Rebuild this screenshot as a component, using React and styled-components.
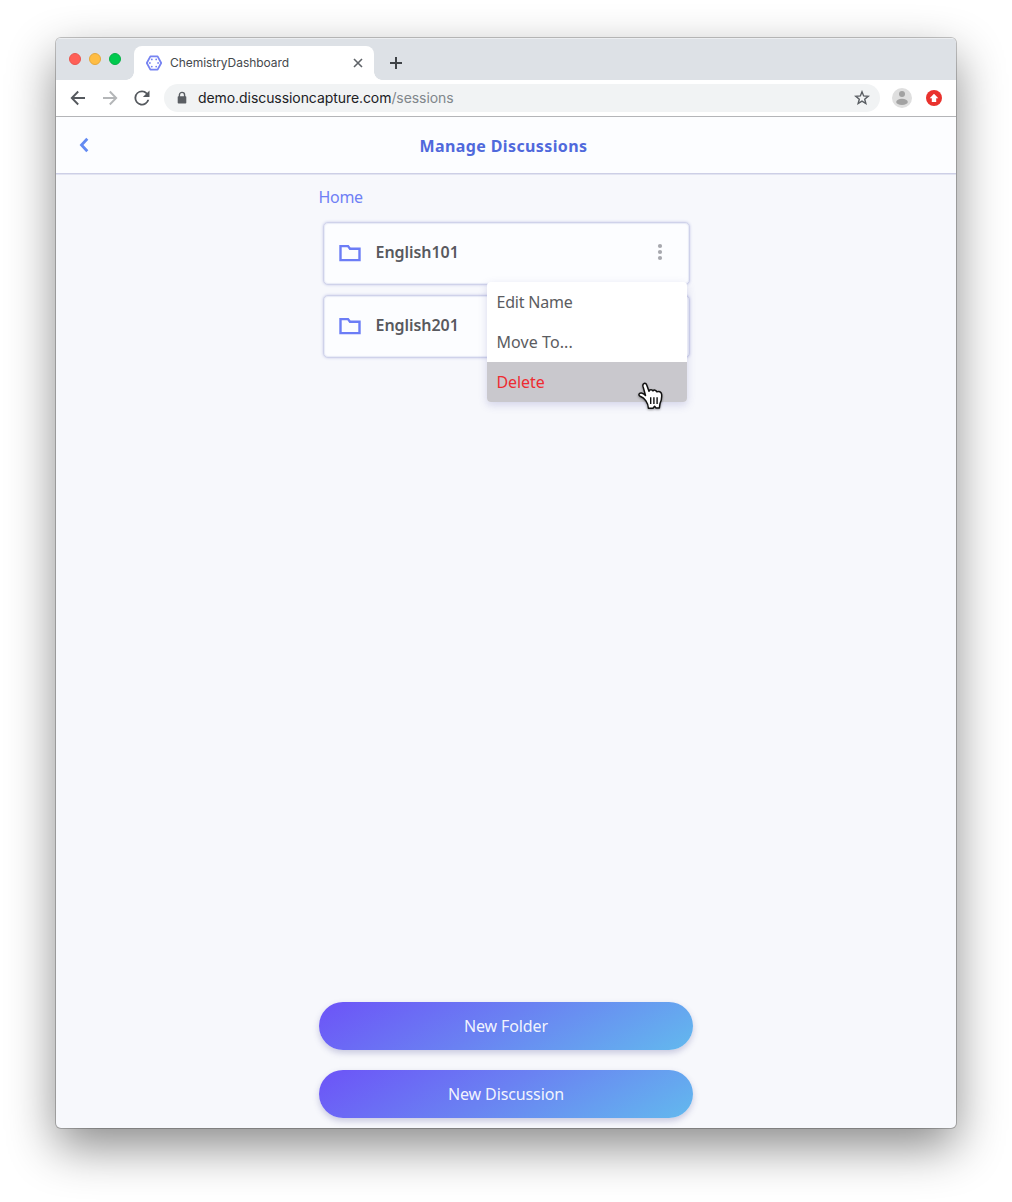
import React from "react";
import styled, { createGlobalStyle } from "styled-components";

const GlobalStyle = createGlobalStyle`
  *, *::before, *::after { box-sizing: border-box; }
  body { margin: 0; background: #fff; font-family: "Noto Sans", sans-serif; }
`;

const Desktop = styled.div`
  width: 1012px;
  height: 1202px;
  padding: 38px 56px 74px;
  overflow: hidden;
`;

const Window = styled.div`
  display: flex;
  flex-direction: column;
  width: 900px;
  height: 1090px;
  border-radius: 5px;
  overflow: hidden;
  background: #f7f8fc;
  box-shadow: 0 0 0 1px rgba(0, 0, 0, 0.22), 0 19px 48px rgba(0, 0, 0, 0.46);
`;

const TabStrip = styled.div`
  display: flex;
  height: 42px;
  flex: none;
  background: #dde1e6;
  box-shadow: inset 0 1px 0 #eceef1;
`;

const Lights = styled.div`
  display: flex;
  gap: 8px;
  width: 78px;
  padding: 15px 0 0 13px;
`;

const Light = styled.span`
  width: 12px;
  height: 12px;
  border-radius: 50%;
  background: ${(p) => p.$color};
  border: 1px solid ${(p) => p.$edge};
`;

const Tab = styled.div`
  position: relative;
  display: flex;
  align-items: center;
  width: 240px;
  height: 34px;
  margin-top: 8px;
  padding: 0 11px 0 12px;
  border-radius: 8px 8px 0 0;
  background: #fff;
  &::before, &::after {
    content: "";
    position: absolute;
    bottom: 0;
    width: 8px;
    height: 8px;
  }
  &::before {
    left: -8px;
    background: radial-gradient(circle at 0 0, transparent 7.5px, #fff 8px);
  }
  &::after {
    right: -8px;
    background: radial-gradient(circle at 100% 0, transparent 7.5px, #fff 8px);
  }
`;

const TabTitle = styled.span`
  flex: 1;
  margin-left: 8px;
  font: 400 12px/16px Inter, sans-serif;
  letter-spacing: -0.05px;
  color: #45494d;
`;

const NewTab = styled.div`
  display: flex;
  padding: 19px 0 0 16px;
`;

const Toolbar = styled.div`
  display: flex;
  align-items: center;
  height: 37px;
  flex: none;
  padding: 0 14px;
  background: #fff;
  border-bottom: 1px solid #b4b5b8;
`;

const NavButtons = styled.div`
  display: flex;
  gap: 16px;
  width: 94px;
`;

const AddressBar = styled.div`
  display: flex;
  align-items: center;
  width: 716px;
  height: 28px;
  padding: 0 10px 0 12px;
  border-radius: 14px;
  background: #f1f3f4;
`;

const Url = styled.span`
  flex: 1;
  margin-left: 10px;
  font: 400 14px/20px Inter, sans-serif;
  letter-spacing: -0.07px;
  color: #202124;
`;

const UrlPath = styled.span`
  color: #80868b;
`;

const Extensions = styled.div`
  display: flex;
  align-items: center;
  gap: 14px;
  margin-left: 12px;
`;

const Header = styled.header`
  display: flex;
  align-items: center;
  height: 57px;
  flex: none;
  padding: 1px 39px 0 22px;
  background: #fcfdff;
  border-bottom: 1px solid #cdcfe6;
  box-shadow: 0 1px 0 #e2e4f1;
`;

const BackIcon = styled.svg`
  display: block;
  flex: none;
  margin-top: -2px;
`;

const Title = styled.h1`
  flex: 1;
  margin: 0;
  text-align: center;
  font-size: 16px;
  line-height: 22px;
  font-weight: 700;
  letter-spacing: 0.38px;
  color: #5069dc;
`;

const Content = styled.main`
  display: flex;
  flex-direction: column;
  flex: 1;
  width: 374px;
  margin: 0 auto;
  padding: 12px 0 10px;
`;

const Breadcrumb = styled.a`
  font-size: 16px;
  line-height: 22px;
  margin-left: -0.5px;
  letter-spacing: -0.3px;
  color: #6f80f5;
`;

const FolderList = styled.div`
  display: flex;
  flex-direction: column;
  gap: 10px;
  margin: 14px 3px 0 4px;
  flex: 1;
`;

const FolderCard = styled.div`
  position: relative;
  display: flex;
  align-items: center;
  height: 63px;
  padding: 0 21px 3px 15px;
  border: 1px solid #cfd2ea;
  border-radius: 5px;
  background: #fcfdff;
  box-shadow: 0 0 3px #c6c9e8, inset 0 0 1px 1px rgba(207, 210, 234, 0.45);
`;

const FolderName = styled.span`
  flex: 1;
  margin-left: 14.5px;
  font-size: 16px;
  line-height: 22px;
  font-weight: 600;
  letter-spacing: -0.05px;
  color: #58595e;
`;

const Menu = styled.div`
  position: absolute;
  z-index: 1;
  top: 59px;
  right: 2px;
  width: 200px;
  border-radius: 4px;
  background: #fff;
  box-shadow: 0 3px 9px rgba(80, 80, 170, 0.22);
`;

const MenuItem = styled.div`
  height: 40px;
  padding: 9px 9.5px;
  font-size: 16px;
  line-height: 22px;
  letter-spacing: ${(p) => p.$tracking || "-0.1px"};
  color: ${(p) => (p.$danger ? "#ee2c32" : "#5b5c61")};
  background: ${(p) => (p.$hovered ? "#c9c8cd" : "transparent")};
  &:first-of-type { border-radius: 4px 4px 0 0; }
  &:last-of-type { border-radius: 0 0 4px 4px; }
`;

const Pointer = styled.svg`
  position: absolute;
  left: 149.5px;
  top: 99px;
  filter: drop-shadow(0 1px 1px rgba(0, 0, 0, 0.35));
`;

const Actions = styled.div`
  display: flex;
  flex-direction: column;
  gap: 20px;
`;

const ActionButton = styled.button`
  height: 48px;
  border: 0;
  border-radius: 24px;
  padding: 0;
  font: 400 16px/22px "Noto Sans", sans-serif;
  letter-spacing: -0.12px;
  color: rgba(255, 255, 255, 0.93);
  background: linear-gradient(150deg, #6c58f7 5%, #6a82f2 48%, #63b6ee 97%);
  box-shadow: 0 3px 6px rgba(60, 60, 140, 0.25);
`;

const FolderIcon = styled.svg`
  flex: none;
  margin-top: 2px;
`;

const Favicon = () => (
  <svg width="16" height="16" viewBox="0 0 16 16" fill="none">
    <path d="M4.4 1.4h7.2L15.2 8l-3.6 6.6H4.4L.8 8z" stroke="#7683f2" strokeWidth="1.8" strokeLinejoin="round" />
    <g fill="#7683f2">
      <circle cx="5.8" cy="4.4" r=".9" />
      <circle cx="10.2" cy="4.4" r=".9" />
      <circle cx="3.9" cy="8" r=".9" />
      <circle cx="12.1" cy="8" r=".9" />
      <circle cx="5.8" cy="11.6" r=".9" />
      <circle cx="10.2" cy="11.6" r=".9" />
    </g>
  </svg>
);

const Cross = () => (
  <svg width="10" height="10" viewBox="0 0 10 10">
    <path d="m1 1 8 8M9 1 1 9" stroke="#5f6368" strokeWidth="1.6" />
  </svg>
);

const Plus = () => (
  <svg width="12" height="12" viewBox="0 0 12 12">
    <path d="M6 0v12M0 6h12" stroke="#3f4347" strokeWidth="2" />
  </svg>
);

const Arrow = ({ color, flip }) => (
  <svg width="16" height="16" viewBox="0 0 16 16" fill="none" transform={flip ? "scale(-1 1)" : undefined}>
    <path d="M15 8H2.2M8.2 1.5 1.8 8l6.4 6.5" stroke={color} strokeWidth="1.9" />
  </svg>
);

const Reload = () => (
  <svg width="16" height="16" viewBox="4 4 16 16">
    <path fill="#55595e" d="M17.65 6.35A7.95 7.95 0 0 0 12 4a8 8 0 1 0 7.73 10h-2.08A6 6 0 1 1 12 6c1.66 0 3.14.69 4.22 1.78L13 11h7V4z" transform="translate(.7 .7) scale(.94)" />
  </svg>
);

const Lock = () => (
  <svg width="12" height="14" viewBox="0 0 12 14">
    <path d="M3.4 6V4a2.6 2.6 0 0 1 5.2 0v2" fill="none" stroke="#5a5e63" strokeWidth="1.4" />
    <rect x="1.7" y="5.2" width="8.6" height="7.3" rx=".8" fill="#5a5e63" />
  </svg>
);

const Star = () => (
  <svg width="16" height="16" viewBox="0 0 16 16">
    <path d="m8 1.8 1.65 4.15 4.55.3-3.5 2.9 1.15 4.4L8 11.1l-3.85 2.45 1.15-4.4-3.5-2.9 4.55-.3z" fill="none" stroke="#5a5e63" strokeWidth="1.4" />
  </svg>
);

const Avatar = () => (
  <svg width="20" height="20" viewBox="0 0 20 20">
    <circle cx="10" cy="10" r="10" fill="#dfdfdf" />
    <circle cx="10" cy="6" r="3" fill="#a2a2a2" />
    <ellipse cx="10" cy="13.9" rx="5.8" ry="3.1" fill="#a2a2a2" />
  </svg>
);

const UpdateBadge = () => (
  <svg width="16" height="16" viewBox="0 0 16 16">
    <circle cx="8" cy="8" r="8" fill="#e9322d" />
    <path d="M8 3.7 3.7 8.3h2.1V12h4.4V8.3h2.1z" fill="#fff" />
  </svg>
);

const Folder = () => (
  <FolderIcon width="22" height="18" viewBox="0 0 22 18">
    <path d="M1.5 16.1V2.1H9l2 2.7h9.5v11.3z" fill="none" stroke="#6c7df6" strokeWidth="2.4" />
  </FolderIcon>
);

const Dots = () => (
  <svg width="16" height="20" viewBox="0 0 16 20" fill="#a7a8ae">
    <circle cx="8" cy="4" r="2.1" />
    <circle cx="8" cy="10" r="2.1" />
    <circle cx="8" cy="16" r="2.1" />
  </svg>
);

const Hand = () => (
  <Pointer width="28" height="30" viewBox="0 0 28 30">
    <path
      d="M8.9 19.8C7.5 17.7 5.9 16.4 3.2 15.3 1 14.2 2 11.5 4.5 12 6.2 12.4 7.4 13.3 8.5 14.5L6 5.4C5.2 2.2 8.6 1.2 9.7 4L12 10.2C12.5 8.2 15.2 8.2 16 9.9 16.9 8.6 19.2 8.9 19.8 10.8 21.7 9.8 24.3 10.9 24.6 13.2 25 17 24.7 19.3 23 22.6L22.4 26.9H19L17.6 25.3 16 27.2H11.4C11.3 24.4 10.4 22 8.9 19.8Z"
      fill="#fff"
      stroke="#111"
      strokeWidth="1.5"
      strokeLinejoin="round"
    />
    <path d="M13.7 16.3v6.7M16.9 16.3v6.6M20.1 16.3v6.6" stroke="#111" strokeWidth="1.4" />
  </Pointer>
);

export default function App() {
  return (
    <>
      <GlobalStyle />
      <Desktop>
        <Window>
          <TabStrip>
            <Lights>
              <Light $color="#ff5f57" $edge="#e9564f" />
              <Light $color="#ffbd44" $edge="#e5a83c" />
              <Light $color="#00ca4e" $edge="#06b047" />
            </Lights>
            <Tab>
              <Favicon />
              <TabTitle>ChemistryDashboard</TabTitle>
              <Cross />
            </Tab>
            <NewTab><Plus /></NewTab>
          </TabStrip>
          <Toolbar>
            <NavButtons>
              <Arrow color="#55595e" />
              <Arrow color="#b4b6b8" flip />
              <Reload />
            </NavButtons>
            <AddressBar>
              <Lock />
              <Url>demo.discussioncapture.com<UrlPath>/sessions</UrlPath></Url>
              <Star />
            </AddressBar>
            <Extensions>
              <Avatar />
              <UpdateBadge />
            </Extensions>
          </Toolbar>
          <Header>
            <BackIcon width="12" height="16" viewBox="0 0 12 16">
              <path d="M9.3 1.8 3.5 8l5.8 6.2" fill="none" stroke="#638af2" strokeWidth="2.8" />
            </BackIcon>
            <Title>Manage Discussions</Title>
          </Header>
          <Content>
            <Breadcrumb>Home</Breadcrumb>
            <FolderList>
              <FolderCard>
                <Folder />
                <FolderName>English101</FolderName>
                <Dots />
                <Menu>
                  <MenuItem $tracking="-0.2px">Edit Name</MenuItem>
                  <MenuItem $tracking="0.08px">Move To...</MenuItem>
                  <MenuItem $danger $hovered>Delete</MenuItem>
                  <Hand />
                </Menu>
              </FolderCard>
              <FolderCard>
                <Folder />
                <FolderName>English201</FolderName>
                <Dots />
              </FolderCard>
            </FolderList>
            <Actions>
              <ActionButton>New Folder</ActionButton>
              <ActionButton>New Discussion</ActionButton>
            </Actions>
          </Content>
        </Window>
      </Desktop>
    </>
  );
}
